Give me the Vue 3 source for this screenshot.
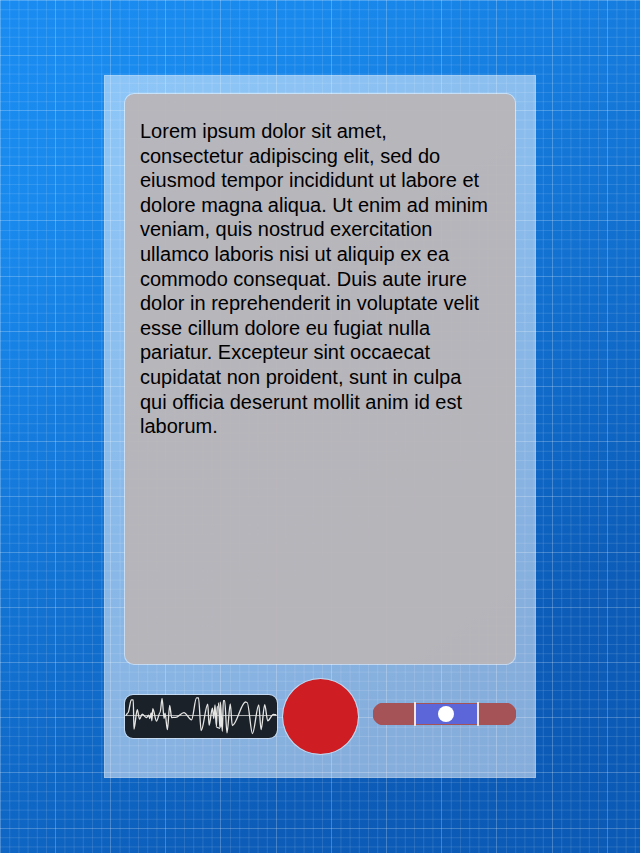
<script setup>
import { ref } from 'vue'

const recording = ref(false)
const level = ref(51)

const cell = 9.2
const lines = Array.from({ length: 30 }, (_, i) => ({
  at: i % 6 === 0 ? Math.floor(i * cell) : i * cell,
  major: i % 6 === 0,
}))

// Turning points of the recorded signal, joined by curves that are flat at each one.
const peaks = [
  [14, 91], [21, 83], [31, 42], [37, 42], [39, 134], [49, 73], [56, 103], [64, 87],
  [77, 98], [83, 90], [87, 101], [91, 83], [93, 108], [96, 70], [107, 109], [118, 82],
  [124, 38], [130, 101], [133, 84], [140, 136], [147, 60], [153, 98], [165, 97],
  [190, 82], [213, 105], [228, 36], [234, 36], [242, 139], [262, 56], [266, 122],
  [276, 68], [280, 101], [284, 58], [287, 120], [291, 61], [288, 128], [299, 132],
  [294, 51], [301, 128], [300, 48], [306, 141], [309, 45], [313, 45], [320, 146],
  [330, 55], [336, 123], [376, 49], [381, 51], [397, 148], [416, 58], [423, 136],
  [434, 57], [443, 108], [460, 88], [469, 89],
]
const wave = peaks.reduce((d, [x, y], i) => {
  if (i === 0) return `M${x} ${y}`
  const [px, py] = peaks[i - 1]
  const reach = (x - px) * 0.33
  return `${d}C${px + reach} ${py} ${x - reach} ${y} ${x} ${y}`
}, '')
</script>

<template>
  <main class="page">
    <svg class="grid" aria-hidden="true">
      <defs>
        <pattern id="blueprint" width="276" height="276" patternUnits="userSpaceOnUse">
          <g v-for="line in lines" :key="line.at" :class="line.major ? 'major' : 'minor'">
            <rect :x="line.at" y="0" width="1" height="276" />
            <rect x="0" :y="line.at" width="276" height="1" />
          </g>
        </pattern>
      </defs>
      <rect width="100%" height="100%" fill="url(#blueprint)" />
    </svg>

    <section class="card">
      <p class="script">
        Lorem ipsum dolor sit amet, consectetur adipiscing elit, sed do eiusmod tempor
        incididunt ut labore et dolore magna aliqua. Ut enim ad minim veniam, quis nostrud
        exercitation ullamco laboris nisi ut aliquip ex ea commodo consequat. Duis aute irure
        dolor in reprehenderit in voluptate velit esse cillum dolore eu fugiat nulla pariatur.
        Excepteur sint occaecat cupidatat non proident, sunt in culpa qui officia deserunt
        mollit anim id est laborum.
      </p>

      <div class="controls">
        <svg class="wave" viewBox="12 27 459 135" preserveAspectRatio="none" role="img" aria-label="Waveform">
          <path class="axis" d="M12 91.5H471" />
          <path class="signal" :d="wave" />
        </svg>
        <button
          class="record"
          type="button"
          aria-label="Record"
          :aria-pressed="recording"
          @click="recording = !recording"
        ></button>
        <input v-model="level" class="level" type="range" min="0" max="100" aria-label="Level" />
      </div>
    </section>
  </main>
</template>

<style>
body {
  margin: 0;
}
</style>

<style scoped>
.page {
  position: relative;
  box-sizing: border-box;
  display: flex;
  min-height: 100vh;
  padding: 75px 104px;
  background: linear-gradient(145deg, #1a8cf1 0%, #1989ed 18%, #0c5cb8 78%, #0b5ab5 100%);
  font-family: "Liberation Sans", Arial, sans-serif;
}

.grid {
  position: absolute;
  inset: 0;
  width: 100%;
  height: 100%;
}

.minor {
  fill: rgba(255, 255, 255, 0.11);
}

.major {
  fill: rgba(255, 255, 255, 0.23);
}

.card {
  position: relative;
  box-sizing: border-box;
  display: flex;
  flex: 1;
  flex-direction: column;
  gap: 13px;
  min-width: 0;
  padding: 17px 19px 22px;
  border: 1px solid rgba(255, 255, 255, 0.6);
  background: rgba(255, 255, 255, 0.5);
  background-clip: padding-box;
}

.script {
  box-sizing: border-box;
  flex: 1;
  margin: 0;
  padding: 25px 24px 25px 15px;
  border: 1px solid rgba(255, 255, 255, 0.5);
  border-radius: 10px;
  background: rgba(185, 181, 183, 0.93);
  background-clip: padding-box;
  color: #000;
  font-size: 20px;
  line-height: 1.23;
}

.controls {
  display: flex;
  align-items: center;
}

.wave {
  box-sizing: border-box;
  flex: 153 1 0;
  min-width: 0;
  height: 45px;
  border: 1px solid rgba(255, 255, 255, 0.5);
  border-radius: 9px;
  background: #1a2129;
  background-clip: padding-box;
}

.axis,
.signal {
  fill: none;
  stroke: #e4e4e2;
  stroke-width: 4;
}

.axis {
  stroke: #b4b5b6;
  stroke-width: 3;
}

.record {
  box-sizing: border-box;
  flex: none;
  width: 77px;
  height: 77px;
  margin: 0 14px 0 4px;
  padding: 0;
  border: 1px solid rgba(255, 255, 255, 0.5);
  border-radius: 50%;
  background: #ce1e24;
  background-clip: padding-box;
  cursor: pointer;
}

.level {
  flex: 144 1 0;
  min-width: 0;
  height: 26px;
  margin: 0 0 6px;
  appearance: none;
  background: transparent;
  cursor: pointer;
}

.level::-webkit-slider-runnable-track {
  box-sizing: border-box;
  height: 26px;
  background:
    linear-gradient(#f3e4e2, #f3e4e2) 29% 50% / 2px 24px no-repeat,
    linear-gradient(#f3e4e2, #f3e4e2) 74% 50% / 2px 24px no-repeat,
    linear-gradient(90deg, transparent 29%, #5c66d8 29% 74%, transparent 74%) 0 50% / 100% 20px no-repeat,
    linear-gradient(#a55356, #a55356) 50% 50% / calc(100% - 20px) 22px no-repeat,
    radial-gradient(circle at 11px 50%, #a55356 11px, transparent 12px) 0 50% / 11px 22px no-repeat,
    radial-gradient(circle at 0 50%, #a55356 11px, transparent 12px) 100% 50% / 11px 22px no-repeat;
}

.level::-webkit-slider-thumb {
  width: 16px;
  height: 16px;
  margin-top: 5px;
  border: 0;
  border-radius: 50%;
  appearance: none;
  background: #fff;
}
</style>
